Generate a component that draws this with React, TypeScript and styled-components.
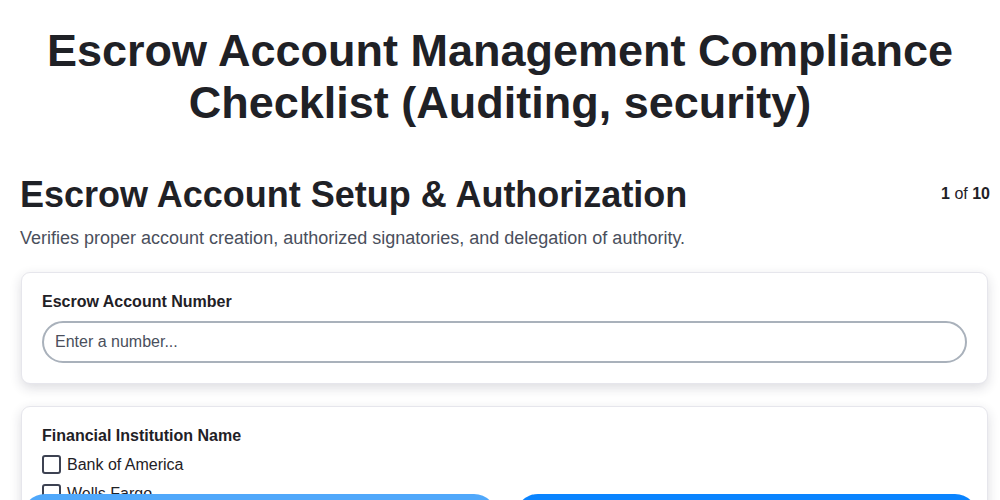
import React, { useState } from "react";
import styled, { createGlobalStyle } from "styled-components";

const GlobalStyle = createGlobalStyle`
    body {
        margin: 0;
        background: #ffffff;
        font-family: "Liberation Sans", Arial, sans-serif;
        color: #1d1d1f;
    }
`;

const Page = styled.div`
    padding: 0 10px 80px 20px;
`;

const Title = styled.h1`
    margin: 25px 10px 0 0;
    text-align: center;
    font-size: 45px;
    line-height: 52px;
    font-weight: 700;
    color: #1f2126;
`;

const SectionHeader = styled.div`
    display: flex;
    justify-content: space-between;
    align-items: flex-start;
    margin-top: 44px;
`;

const SectionTitle = styled.h2`
    margin: 0;
    font-size: 36px;
    line-height: 44px;
    font-weight: 700;
    color: #1f2126;
`;

const Counter = styled.div`
    font-size: 16px;
    line-height: 20px;
    margin-top: 11px;
    color: #1f2126;

    b {
        font-weight: 700;
    }
`;

const Description = styled.p`
    margin: 10px 0 23px;
    font-size: 18px;
    line-height: 22px;
    color: #4a4f5c;
`;

const Card = styled.div`
    margin: 0 2px 22px 1px;
    padding: 19px 20px 20px;
    background: #ffffff;
    border: 1px solid #e6e6ec;
    border-radius: 9px;
    box-shadow: 0 4px 12px rgba(40, 40, 60, 0.16);
`;

const FieldLabel = styled.div`
    font-size: 16px;
    line-height: 20px;
    font-weight: 700;
    color: #1f2126;
    margin-bottom: 9px;
`;

const TextInput = styled.input`
    box-sizing: border-box;
    width: 100%;
    height: 42px;
    padding: 0 11px;
    border: 2px solid #a9b1bb;
    border-radius: 21px;
    font-family: "Liberation Sans", Arial, sans-serif;
    font-size: 16px;
    color: #1f2126;
    outline: none;

    &::placeholder {
        color: #4a4f5c;
    }
`;

const OptionList = styled.div`
    display: flex;
    flex-direction: column;
    gap: 10px;
`;

const OptionRow = styled.label`
    display: flex;
    align-items: center;
    gap: 6px;
    font-size: 16px;
    line-height: 19px;
    color: #1f2126;
`;

const Box = styled.span<{ $checked: boolean }>`
    box-sizing: border-box;
    width: 19px;
    height: 19px;
    border: 2px solid #3d4252;
    border-radius: 3px;
    background: ${({ $checked }) => ($checked ? "#3d4252" : "#fff")};
`;

const Footer = styled.div`
    position: fixed;
    left: 22px;
    right: 22px;
    top: 494px;
    display: grid;
    grid-template-columns: 475fr 463fr;
    gap: 18px;
`;

const NavButton = styled.button<{ $primary?: boolean }>`
    height: 46px;
    border: none;
    border-radius: 23px;
    background: ${({ $primary }) => ($primary ? "#0a84ff" : "#50a8fb")};
    color: #fff;
    font-family: "Liberation Sans", Arial, sans-serif;
    font-size: 16px;
    font-weight: 700;
`;

const banks = ["Bank of America", "Wells Fargo", "JPMorgan Chase", "Citibank"];

const App = () => {
    const [checked, setChecked] = useState<string[]>([]);
    const toggle = (name: string) =>
        setChecked((curr) =>
            curr.includes(name) ? curr.filter((n) => n !== name) : [...curr, name]
        );

    return (
        <>
            <GlobalStyle />
            <Page>
                <Title>
                    Escrow Account Management Compliance Checklist (Auditing,
                    security)
                </Title>
                <SectionHeader>
                    <SectionTitle>Escrow Account Setup &amp; Authorization</SectionTitle>
                    <Counter>
                        <b>1</b> of <b>10</b>
                    </Counter>
                </SectionHeader>
                <Description>
                    Verifies proper account creation, authorized signatories, and
                    delegation of authority.
                </Description>
                <Card>
                    <FieldLabel>Escrow Account Number</FieldLabel>
                    <TextInput placeholder="Enter a number..." />
                </Card>
                <Card>
                    <FieldLabel>Financial Institution Name</FieldLabel>
                    <OptionList>
                        {banks.map((b) => (
                            <OptionRow key={b} onClick={() => toggle(b)}>
                                <Box $checked={checked.includes(b)} />
                                {b}
                            </OptionRow>
                        ))}
                    </OptionList>
                </Card>
            </Page>
            <Footer>
                <NavButton>Previous</NavButton>
                <NavButton $primary>Next</NavButton>
            </Footer>
        </>
    );
};

export default App;
